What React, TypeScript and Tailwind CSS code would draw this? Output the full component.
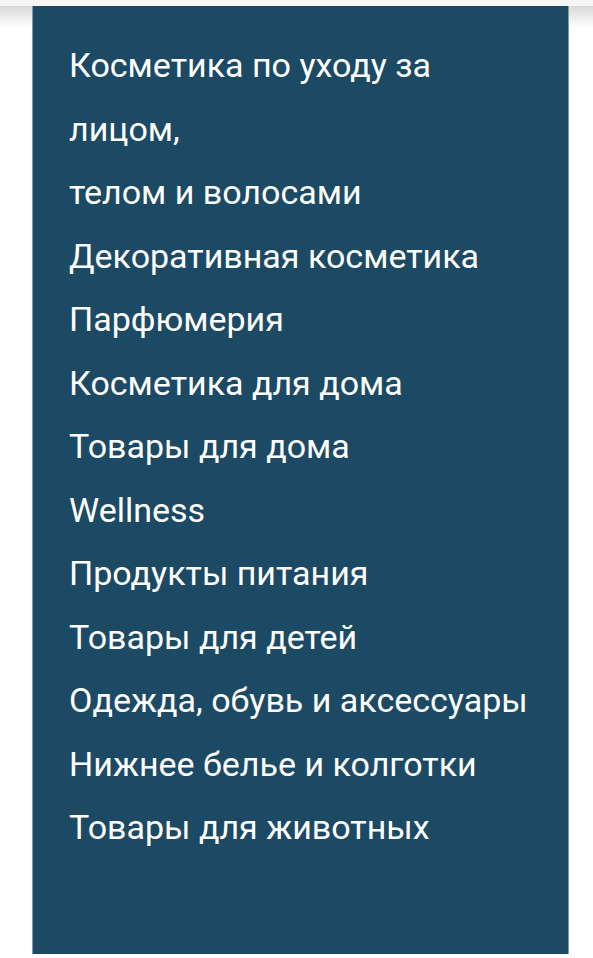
import React from 'react';

const categories: string[] = [
  'Косметика по уходу за',
  'лицом,',
  'телом и волосами',
  'Декоративная косметика',
  'Парфюмерия',
  'Косметика для дома',
  'Товары для дома',
  'Wellness',
  'Продукты питания',
  'Товары для детей',
  'Одежда, обувь и аксессуары',
  'Нижнее белье и колготки',
  'Товары для животных',
];

const App: React.FC = () => {
  return (
    <div className="min-h-[958px] bg-white font-['Roboto',sans-serif]">
      <div className="relative h-[6px] bg-[#f6f5f3]">
        <div className="absolute left-0 right-0 top-[6px] h-[22px] bg-gradient-to-b from-[#d9d9d9] to-white/0" />
      </div>
      <nav className="relative ml-[32px] w-[537px] h-[948px] border-x border-[#7f9aab] bg-[#1c4a65] pl-[36px] pt-[28px]">
        <ul>
          {categories.map((item) => (
            <li key={item} className="text-[34px] leading-[63.5px] text-white whitespace-nowrap">
              {item}
            </li>
          ))}
        </ul>
      </nav>
    </div>
  );
};

export default App;
